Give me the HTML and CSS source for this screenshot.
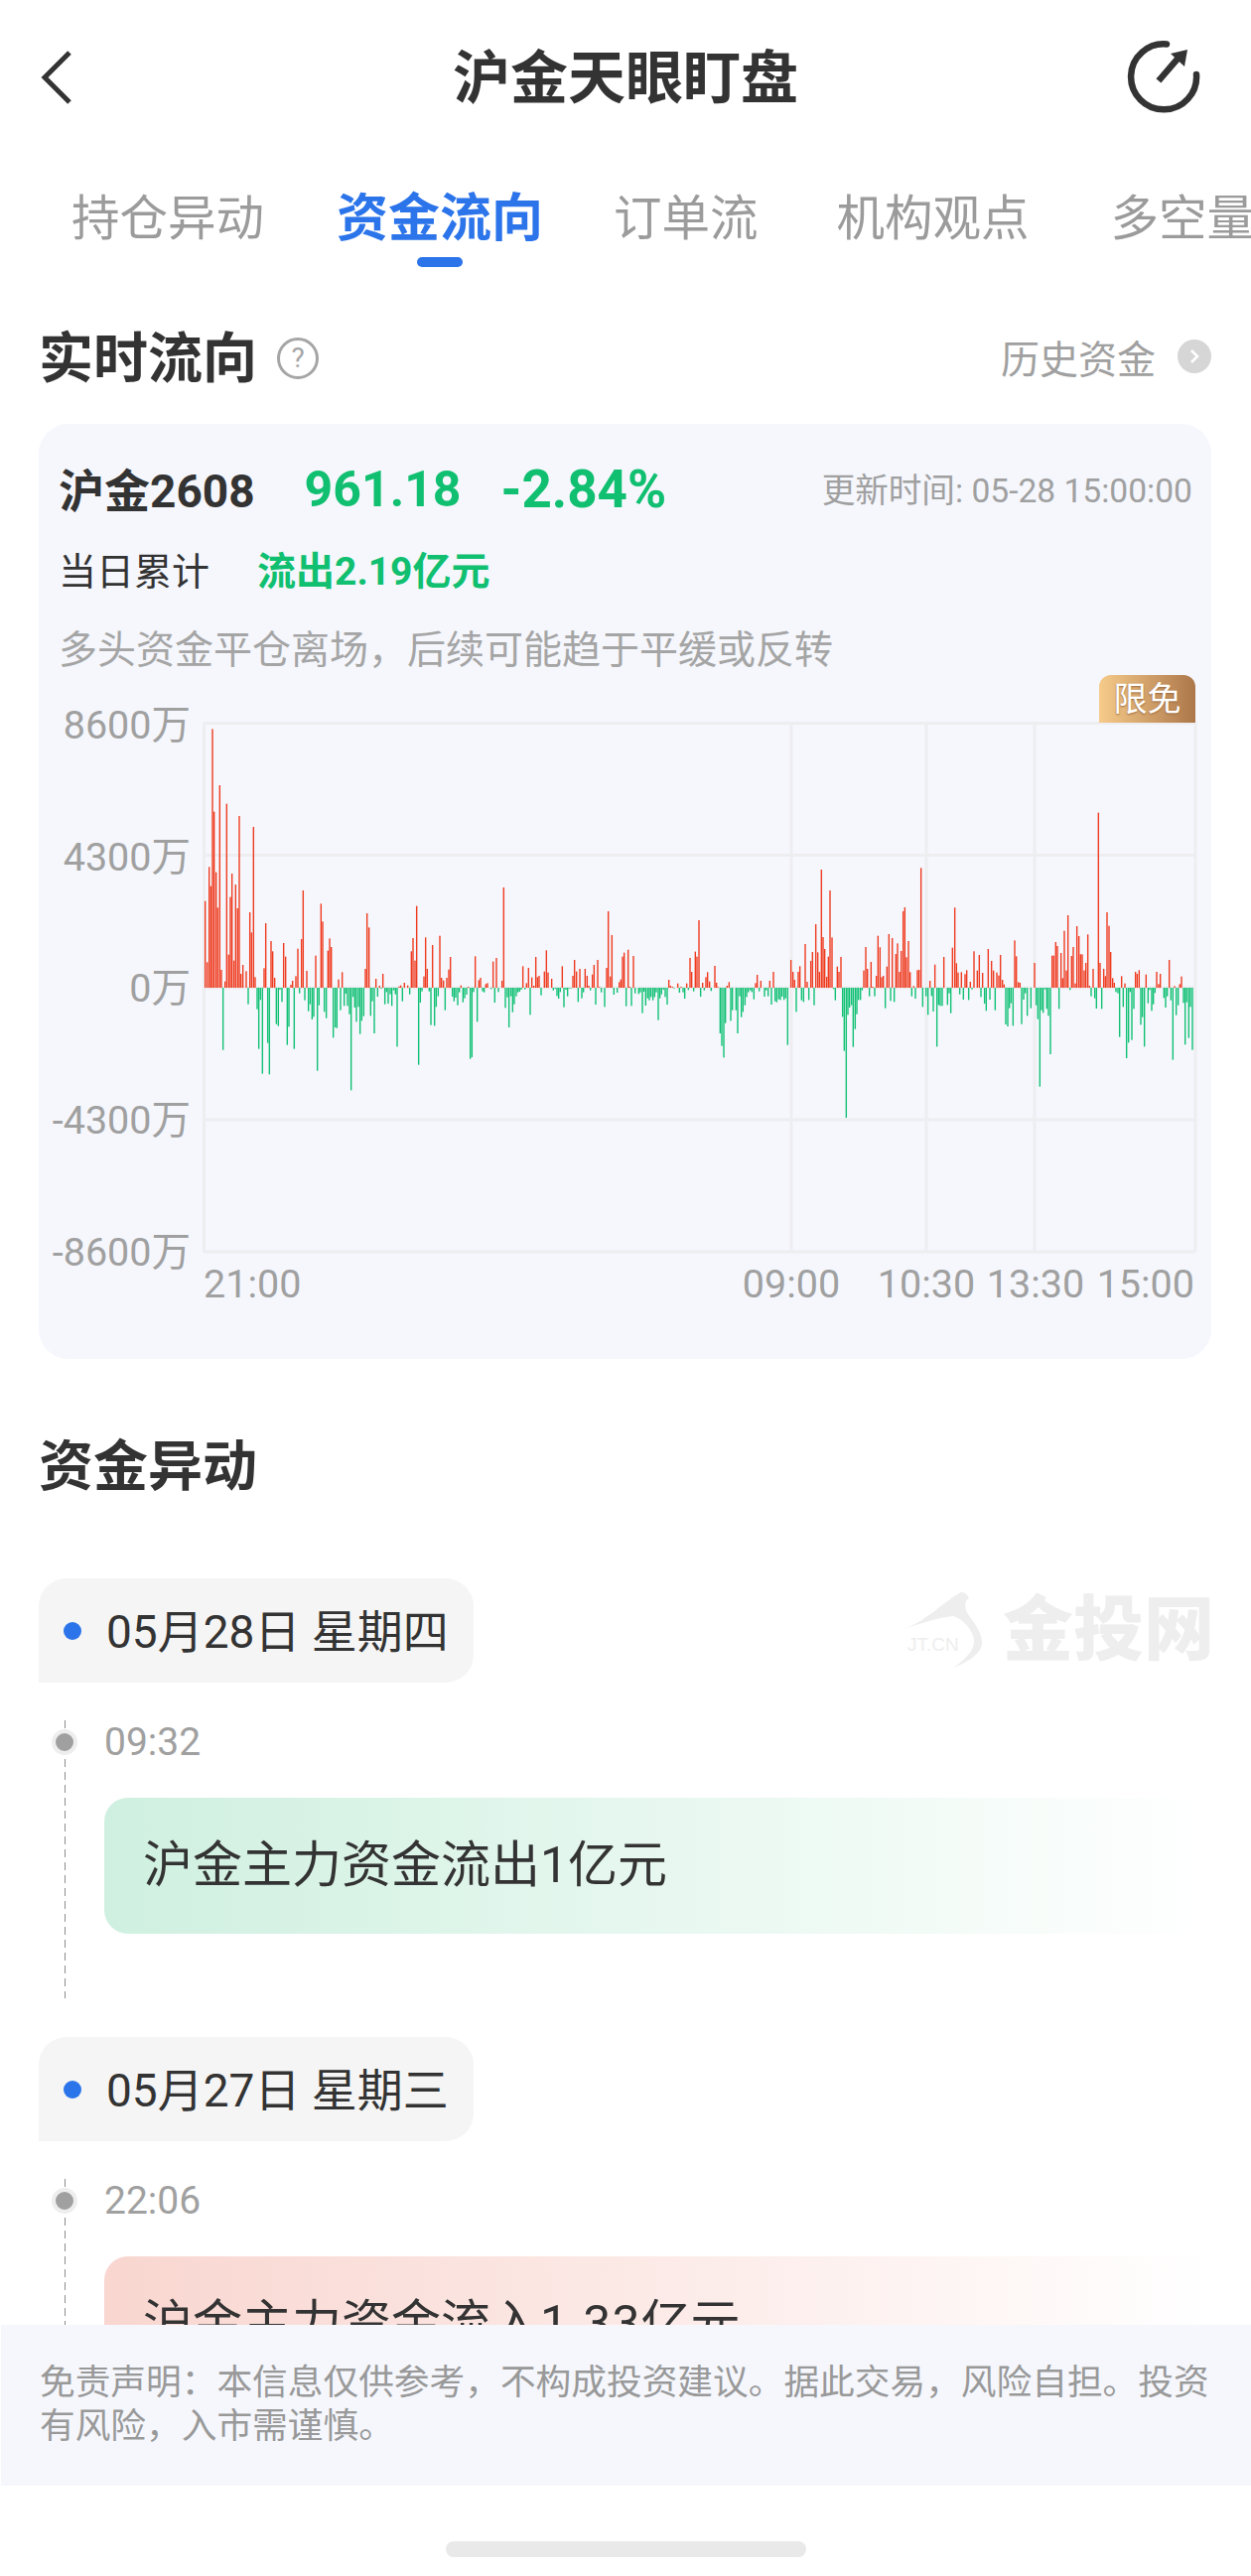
FILE: index.html
```html
<!DOCTYPE html>
<html lang="zh-CN">
<head>
    <meta charset="UTF-8">
    <meta name="viewport" content="width=device-width, initial-scale=1.0">
    <title>沪金天眼盯盘</title>
    <link rel="stylesheet" href="styles.css">
</head>
<body>
<div class="page">
    <div class="content">
        <div class="header">
            <svg class="back-icon" width="32" height="54" viewBox="0 0 32 54">
                <path d="M29 2 L4 27 L29 52" fill="none" stroke="#333" stroke-width="5"/>
            </svg>
            <div class="title">沪金天眼盯盘</div>
            <svg class="timer-icon" width="76" height="76" viewBox="0 0 76 76">
                <path d="M41 4.5 A33 33 0 1 0 71 35" fill="none" stroke="#333" stroke-width="6.5" stroke-linecap="round"/>
                <path d="M35 39 L53 18" fill="none" stroke="#333" stroke-width="6.5" stroke-linecap="square"/>
                <path d="M45 14 L62 10 L59 27 Z" fill="#333"/>
            </svg>
        </div>

        <div class="tabs">
            <div class="tab">持仓异动</div>
            <div class="tab active">资金流向</div>
            <div class="tab">订单流</div>
            <div class="tab">机构观点</div>
            <div class="tab">多空量</div>
        </div>

        <div class="section-head">
            <h2>实时流向</h2>
            <span class="help">?</span>
            <div class="history">
                <span>历史资金</span>
                <span class="history-arrow">
                    <svg width="10" height="16" viewBox="0 0 10 16"><path d="M2 2 L8 8 L2 14" fill="none" stroke="#fff" stroke-width="2.5"/></svg>
                </span>
            </div>
        </div>

        <div class="card">
            <div class="quote">
                <span class="quote-name">沪金2608</span>
                <span class="quote-price">961.18</span>
                <span class="quote-change">-2.84%</span>
                <span class="quote-time">更新时间: 05-28 15:00:00</span>
            </div>
            <div class="total">
                <span>当日累计</span>
                <span class="total-value">流出2.19亿元</span>
            </div>
            <div class="hint">多头资金平仓离场，后续可能趋于平缓或反转</div>
            <div class="chart">
                <div class="badge">限免</div>
                <!-- viewBox 用页面坐标，方便对照 -->
                <svg id="flow-chart" width="1181" height="661" viewBox="39 679 1181 661">
                    <g class="grid">
                        <line x1="205" y1="727.5" x2="1204" y2="727.5"/>
                        <line x1="205" y1="860.5" x2="1204" y2="860.5"/>
                        <line x1="205" y1="994" x2="1204" y2="994"/>
                        <line x1="205" y1="1127" x2="1204" y2="1127"/>
                        <line x1="205" y1="1260" x2="1204" y2="1260"/>
                        <line x1="205.5" y1="727" x2="205.5" y2="1260"/>
                        <line x1="797" y1="727" x2="797" y2="1260"/>
                        <line x1="933" y1="727" x2="933" y2="1260"/>
                        <line x1="1042" y1="727" x2="1042" y2="1260"/>
                        <line x1="1204" y1="727" x2="1204" y2="1260"/>
                    </g>
                    <g id="bars"></g>
                    <g class="axis-y">
                        <text x="192" y="743">8600万</text>
                        <text x="192" y="876">4300万</text>
                        <text x="192" y="1008">0万</text>
                        <text x="192" y="1141">-4300万</text>
                        <text x="192" y="1274">-8600万</text>
                    </g>
                    <g class="axis-x">
                        <text x="205" y="1306">21:00</text>
                        <text x="797" y="1306" text-anchor="middle">09:00</text>
                        <text x="933" y="1306" text-anchor="middle">10:30</text>
                        <text x="1043" y="1306" text-anchor="middle">13:30</text>
                        <text x="1203" y="1306" text-anchor="end">15:00</text>
                    </g>
                </svg>
            </div>
        </div>

        <div class="section-head section-moves">
            <h2>资金异动</h2>
        </div>

        <div class="day">
            <div class="day-pill"><span class="day-dot"></span>05月28日 星期四</div>
            <div class="watermark">
                <svg width="80" height="76" viewBox="0 0 80 76">
                    <path d="M0 37 C22 30 42 8 58 0 C62 0 65 3 66 6 C61 9 61 15 65 22 C74 34 80 44 79 52 C78 62 64 71 50 76 C62 68 72 58 71 48 C70 38 60 27 50 24 C36 25 16 32 0 37 Z" fill="#eeeeee"/>
                    <text x="4" y="59" class="watermark-en">JT.CN</text>
                </svg>
                <span class="watermark-text">金投网</span>
            </div>
        </div>
        <div class="entry">
            <span class="entry-node"></span>
            <div class="entry-time">09:32</div>
            <div class="entry-body down">沪金主力资金流出1亿元</div>
        </div>

        <div class="day">
            <div class="day-pill"><span class="day-dot"></span>05月27日 星期三</div>
        </div>
        <div class="entry">
            <span class="entry-node"></span>
            <div class="entry-time">22:06</div>
            <div class="entry-body up">沪金主力资金流入<span class="entry-num">1.33</span>亿元</div>
        </div>
    </div>

    <div class="disclaimer">免责声明：本信息仅供参考，不构成投资建议。据此交易，风险自担。投资有风险，入市需谨慎。</div>
    <div class="home-area"><div class="home-bar"></div></div>
</div>

<script>
    // [x, y]：y 是柱顶/柱底，0 轴在 y=852，坐标放大了 3 倍
    const part1 = { x0: 190, up: [[50,590],[56,775],[62,487],[67,545],[72,70],[77,320],[83,503],[88,610],[94,240],[99,798],[110,833],[115,296],[121,752],[126,578],[131,507],[137,770],[142,540],[148,612],[153,333],[158,810],[164,783],[174,802],[185,624],[190,685],[196,366],[201,820],[228,793],[233,657],[249,711],[254,742],[260,822],[287,717],[293,758],[309,843],[314,831],[324,817],[330,734],[341,705],[346,558],[357,801],[384,755],[400,598],[405,652],[421,740],[426,703],[431,729],[453,827],[464,805],[534,795],[539,627],[545,670],[566,825],[577,846],[587,810],[636,848],[641,845],[652,837],[662,845],[673,742],[678,702],[684,770],[689,605],[711,818],[716,700],[721,795],[737,723],[759,695],[764,822],[770,830],[780,822],[786,797],[791,759],[823,845],[845,849],[866,757],[877,829],[882,822],[898,841],[903,838],[920,773],[930,762],[947,831],[952,549],[1010,787],[1021,838],[1027,792],[1037,821],[1043,846],[1049,759],[1054,820],[1059,816],[1075,803],[1081,739],[1086,806],[1097,825],[1129,787],[1161,816],[1166,768],[1172,803],[1182,795],[1198,795],[1204,816],[1209,846],[1220,812],[1225,783],[1236,768],[1241,850],[1263,792],[1268,621],[1274,818],[1279,693],[1301,835],[1306,827],[1311,758],[1316,746],[1328,737],[1333,849],[1344,756],[1451,828],[1456,846],[1462,849],[1478,839],[1488,849],[1505,839],[1515,762],[1520,804]],
        down: [[104,1040],[180,902],[207,917],[212,1037],[217,889],[223,1112],[239,1019],[244,1114],[265,962],[271,968],[276,858],[282,895],[298,1025],[303,970],[319,1037],[335,869],[351,890],[362,923],[367,902],[373,948],[378,940],[389,1103],[394,905],[410,925],[416,944],[437,1003],[443,972],[448,974],[459,920],[470,907],[475,870],[480,907],[486,932],[491,1162],[497,880],[502,912],[507,955],[513,910],[518,992],[523,952],[529,938],[550,937],[555,893],[561,990],[571,879],[582,855],[593,902],[598,865],[603,900],[609,872],[614,907],[620,860],[625,872],[630,1030],[646,893],[668,872],[695,1085],[700,897],[705,863],[727,863],[732,965],[743,967],[748,910],[754,878],[775,920],[797,879],[802,893],[807,882],[813,905],[818,866],[829,896],[834,884],[840,873],[851,1067],[856,1062],[861,865],[872,955],[888,863],[893,866],[914,856],[925,897],[936,865],[957,913],[963,881],[968,972],[974,878],[979,926],[984,902],[990,878],[995,866],[1000,864],[1005,858],[1016,857],[1032,934],[1065,875],[1102,860],[1108,855],[1113,877],[1118,885],[1123,865],[1134,911],[1140,858],[1145,878],[1150,854],[1155,854],[1177,895],[1188,884],[1193,866],[1214,860],[1230,903],[1247,866],[1257,910],[1285,873],[1295,867],[1322,908],[1338,907],[1349,869],[1360,871],[1365,866],[1371,929],[1376,864],[1381,906],[1387,884],[1392,890],[1397,880],[1403,890],[1408,880],[1413,866],[1419,950],[1424,884],[1429,872],[1435,858],[1440,880],[1446,903],[1467,854],[1483,867],[1494,866],[1499,885],[1510,859],[1526,863]] };

    const part2 = { x0: 700, up: [[1,743],[6,758],[12,648],[23,837],[33,820],[38,805],[44,833],[60,786],[65,837],[70,850],[97,846],[103,835],[183,838],[188,813],[199,831],[226,831],[237,804],[290,768],[296,804],[301,828],[312,804],[317,787],[333,720],[339,834],[350,771],[355,744],[365,660],[371,745],[376,804],[382,495],[387,699],[392,735],[398,819],[403,758],[408,558],[414,700],[430,788],[435,804],[441,759],[510,800],[516,729],[521,795],[532,774],[537,849],[548,816],[553,695],[559,730],[564,820],[569,816],[580,788],[586,690],[596,702],[607,750],[612,718],[618,804],[623,741],[629,621],[634,609],[639,760],[645,711],[650,805],[661,847],[672,799],[677,798],[683,490],[710,831],[725,782],[752,759],[778,731],[785,610],[790,778],[795,806],[805,805],[816,811],[821,799],[832,834],[843,742],[853,800],[859,753],[869,807],[886,735],[896,771],[902,800],[912,806],[918,815],[923,753],[929,828],[934,842],[966,709],[971,757],[977,835],[982,837],[1026,777],[1079,755],[1084,755],[1090,714],[1095,726],[1106,747],[1111,823],[1116,680],[1122,800],[1127,633],[1138,756],[1143,729],[1149,839],[1154,666],[1160,696],[1165,751],[1170,751],[1176,800],[1181,777],[1187,691],[1192,846],[1203,795],[1219,323],[1224,777],[1235,795],[1240,817],[1245,624],[1251,665],[1256,744],[1262,823],[1267,837],[1289,817],[1299,839],[1331,804],[1336,810],[1342,799],[1363,812],[1395,804],[1401,841],[1406,810],[1433,768],[1449,847],[1465,841],[1470,818]],
        down: [[17,879],[28,860],[49,862],[76,990],[81,1028],[87,1063],[92,959],[108,952],[113,920],[124,920],[129,990],[135,878],[140,941],[145,925],[151,905],[156,880],[161,866],[167,860],[172,865],[178,887],[194,863],[210,879],[215,860],[221,878],[231,903],[242,893],[247,896],[253,887],[258,889],[263,879],[269,889],[274,884],[280,1025],[306,925],[322,890],[328,895],[344,889],[360,905],[419,856],[424,890],[446,940],[451,1043],[457,1245],[462,934],[467,912],[473,905],[478,1031],[484,977],[489,932],[494,889],[500,889],[505,860],[527,878],[543,878],[575,914],[591,892],[602,895],[655,878],[666,885],[688,910],[698,878],[704,934],[715,877],[720,924],[731,1030],[736,904],[741,907],[747,907],[763,904],[768,869],[773,929],[800,872],[811,888],[827,889],[837,857],[864,880],[875,900],[880,922],[891,888],[907,920],[939,963],[945,969],[950,914],[955,899],[961,967],[987,962],[993,888],[998,869],[1004,937],[1015,914],[1031,905],[1036,947],[1042,1151],[1047,920],[1052,928],[1058,857],[1063,916],[1068,937],[1074,1053],[1100,916],[1133,859],[1197,878],[1208,884],[1213,915],[1229,916],[1272,865],[1278,869],[1283,1001],[1294,910],[1304,1065],[1310,1018],[1315,865],[1320,1010],[1326,916],[1347,964],[1352,941],[1358,1030],[1369,899],[1374,859],[1380,922],[1385,902],[1390,868],[1417,883],[1422,912],[1427,878],[1438,890],[1444,1070],[1454,935],[1460,905],[1476,898],[1481,1024],[1486,896],[1492,1004],[1497,910],[1503,1040]] };

    function drawBars(part) {
        const bars = document.getElementById('bars');
        const add = (item, cls) => {
            const h = Math.abs(item[1] - 852) / 3;
            const rect = document.createElementNS('http://www.w3.org/2000/svg', 'rect');
            rect.setAttribute('class', cls);
            rect.setAttribute('x', part.x0 + item[0] / 3 - 0.7);
            rect.setAttribute('y', cls === 'bar-up' ? 994 - h : 994);
            rect.setAttribute('width', 1.4);
            rect.setAttribute('height', h);
            bars.appendChild(rect);
        };
        part.up.forEach((item) => add(item, 'bar-up'));
        part.down.forEach((item) => add(item, 'bar-down'));
    }
    drawBars(part1);
    drawBars(part2);
</script>
</body>
</html>
```

FILE: styles.css
```css
html, body {
    margin: 0;
    padding: 0;
    background: #fff;
}

body {
    font-family: Roboto, "Noto Sans CJK SC", sans-serif;
    color: #333;
}

.page {
    width: 1260px;
    height: 2595px;
    display: flex;
    flex-direction: column;
    overflow: hidden;
}

.content {
    flex: 1;
    min-height: 0;
    overflow: hidden;
}

/* 顶部 */
.header {
    height: 156px;
    padding: 0 50px;
    display: grid;
    grid-template-columns: 1fr auto 1fr;
    align-items: center;
}

.back-icon {
    margin-left: -9px;
}

.title {
    margin-bottom: 8px;
    font-size: 58px;
    font-weight: 700;
    color: #333;
}

.timer-icon {
    justify-self: end;
}

/* 标签栏 */
.tabs {
    display: flex;
    gap: 73px;
    padding: 33px 0 0 72px;
    white-space: nowrap;
    overflow: hidden;
}

.tab {
    flex: none;
    font-size: 48.5px;
    line-height: 64px;
    color: #9b9b9b;
}

.tab.active {
    margin-right: -2px;
    font-size: 52px;
    font-weight: 700;
    color: #2b74ea;
}

.tab:nth-child(3) {
    margin-right: 6px;
}

.tab:nth-child(4) {
    margin-right: 9px;
}

.tab.active::after {
    content: "";
    display: block;
    width: 46px;
    height: 10px;
    margin: 6px auto 0;
    border-radius: 5px;
    background: #2b74ea;
}

/* 区块标题 */
.section-head {
    margin-top: 62px;
    padding: 0 40px 0 39px;
    height: 60px;
    display: flex;
    align-items: center;
}

.section-head h2 {
    margin: 0;
    font-size: 55px;
    font-weight: 700;
    line-height: 60px;
    color: #333;
}

.help {
    width: 36px;
    height: 36px;
    margin-left: 20px;
    border: 3px solid #a5a5a5;
    border-radius: 50%;
    font-size: 28px;
    line-height: 36px;
    text-align: center;
    color: #a5a5a5;
}

.history {
    margin-left: auto;
    margin-bottom: 4px;
    display: flex;
    align-items: center;
    gap: 22px;
    font-size: 39px;
    color: #a0a0a0;
}

.history-arrow {
    width: 34px;
    height: 34px;
    border-radius: 50%;
    background: #d6d6d6;
    display: flex;
    align-items: center;
    justify-content: center;
}

/* 实时流向卡片 */
.card {
    margin: 36px 40px 0 39px;
    padding: 34px 19px 28px 20px;
    border-radius: 30px;
    background: #f5f7fd;
}

.quote {
    height: 60px;
    display: flex;
    align-items: center;
}

.quote-name {
    font-size: 46px;
    font-weight: 700;
    color: #333;
}

.quote-price, .quote-change {
    margin-top: 4px;
    font-size: 50px;
    font-weight: 700;
    color: #10bf70;
}

.quote-price {
    margin-left: 50px;
}

.quote-change {
    margin-left: 40px;
    font-size: 53px;
}

.quote-time {
    margin-left: auto;
    font-size: 33.6px;
    color: #a0a0a0;
}

.total {
    margin-top: 26px;
    height: 50px;
    display: flex;
    align-items: center;
    gap: 48px;
    font-size: 38px;
    color: #333;
}

.total-value {
    font-size: 39px;
    font-weight: 700;
    color: #10bf70;
}

.hint {
    margin-top: 33px;
    font-size: 39px;
    line-height: 50px;
    color: #a5a5a5;
}

.chart {
    position: relative;
    margin-left: -20px;
    margin-right: -19px;
}

.chart svg {
    display: block;
}

.badge {
    position: absolute;
    top: 0;
    right: 16px;
    width: 97px;
    height: 48px;
    border-radius: 12px 12px 0 0;
    background: linear-gradient(90deg, #f6cb8a, #ad774a);
    font-size: 34px;
    line-height: 48px;
    text-align: center;
    color: #fff;
    text-shadow: 0 1px 2px #9a6a3e;
}

.grid line {
    stroke: #eeeef1;
    stroke-width: 3;
}

.bar-up {
    fill: #ef3b1f;
}

.bar-down {
    fill: #12c074;
}

.axis-y text, .axis-x text {
    font-size: 39.5px;
    fill: #a0a0a0;
}

.axis-y text {
    text-anchor: end;
}

/* 资金异动 */
.section-moves {
    margin-top: 78px;
}

.day {
    margin-top: 83px;
    padding: 0 37px 0 39px;
    display: flex;
    justify-content: space-between;
}

.day + .entry + .day {
    margin-top: 39px;
}

.day-pill {
    width: 438px;
    height: 105px;
    box-sizing: border-box;
    padding: 0 0 5px 25px;
    display: flex;
    align-items: center;
    border-radius: 28px 28px 28px 0;
    background: #f5f5f5;
    font-size: 46px;
    color: #333;
}

.day-dot {
    width: 18px;
    height: 18px;
    margin: 5px 25px 0 0;
    border-radius: 50%;
    background: #2b74ea;
}

.watermark {
    margin-top: 14px;
    height: 76px;
    display: flex;
    align-items: center;
    gap: 20px;
}

.watermark-en {
    font-family: "Liberation Sans", sans-serif;
    font-size: 19px;
    fill: #eeeeee;
}

.watermark-text {
    font-size: 71px;
    font-weight: 900;
    line-height: 76px;
    color: #eeeeee;
}

.entry {
    position: relative;
    margin: 38px 40px 0 65px;
    height: 280px;
    padding-left: 40px;
    background: repeating-linear-gradient(180deg, #8c8c8c 0 8px, transparent 8px 13px) left top / 1px 100% no-repeat;
}

.entry-node {
    position: absolute;
    left: -13px;
    top: 9px;
    width: 18px;
    height: 18px;
    border: 4px solid #eee;
    border-radius: 50%;
    background: #a0a0a0;
}

.entry-time {
    height: 44px;
    font-size: 39px;
    line-height: 44px;
    color: #a0a0a0;
}

.entry-body {
    margin-top: 34px;
    height: 137px;
    padding-left: 39px;
    border-radius: 24px 0 0 24px;
    font-size: 50px;
    line-height: 137px;
    color: #333;
}

.entry-body.down {
    background: linear-gradient(90deg, #cff0e0, #ffffff);
}

.entry-body.up {
    background: linear-gradient(90deg, #f9d6d0, #ffffff);
}

.entry-num {
    letter-spacing: 1px;
}

/* 底部 */
.disclaimer {
    flex: none;
    height: 162px;
    box-sizing: border-box;
    padding: 36px 30px 0 39px;
    margin-left: 1px;
    background: #f5f7fd;
    font-size: 35.7px;
    line-height: 44px;
    color: #999;
}

.home-area {
    flex: none;
    height: 91px;
    padding-top: 56px;
    box-sizing: border-box;
}

.home-bar {
    width: 363px;
    height: 16px;
    margin: 0 auto;
    border-radius: 8px;
    background: #e9e9e9;
}
```
